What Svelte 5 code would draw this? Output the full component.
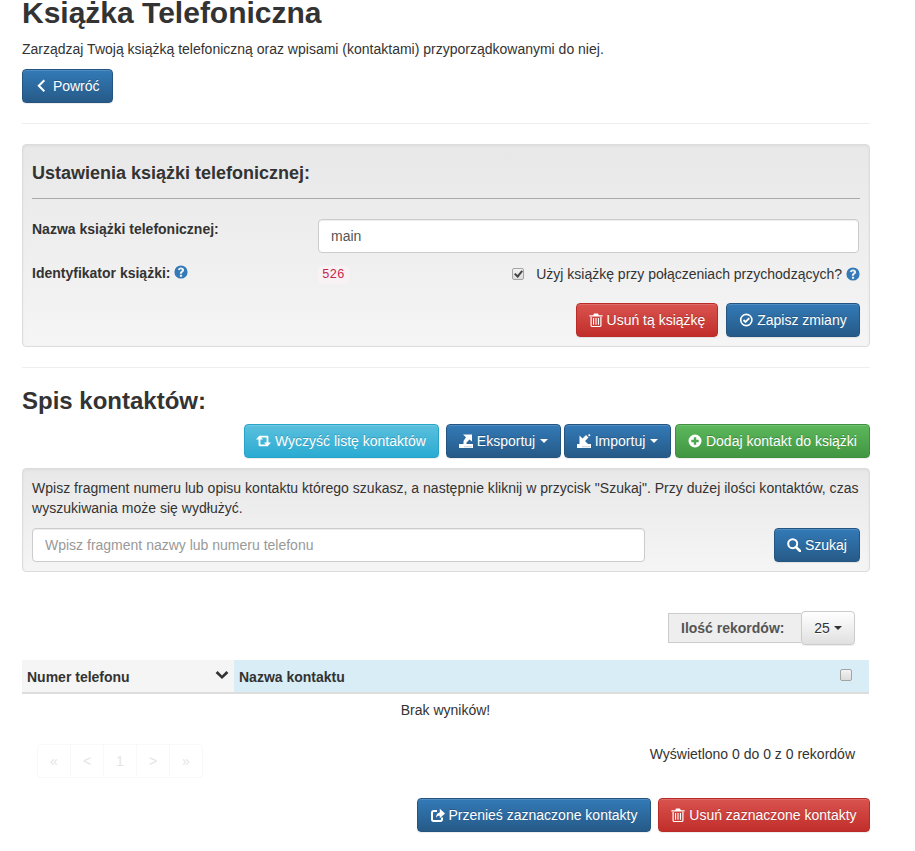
<script lang="ts">
  const pages = ['«', '<', '1', '>', '»'];
</script>

{#snippet icon(name: string)}
  {#if name === 'retweet'}
    <svg class="icon wide" viewBox="0 0 17 12" aria-hidden="true">
      <path d="M1 4.400 4.500.6 8 4.400H5.400v5h5.800l1.600 1.800H4.800c-.8 0-1.200-.4-1.200-1.200V4.400zM16 7.600l-3.500 3.800L9 7.600h2.600v-5H5.800L4.200.8h8c.8 0 1.200.4 1.200 1.200v5.600z" fill="currentColor" />
    </svg>
  {:else}
    <svg class="icon" viewBox="0 0 14 14" aria-hidden="true">
      {#if name === 'back'}
        <path d="M9.300 1.300 3.800 6.800l5.500 5.500" fill="none" stroke="currentColor" stroke-width="2" />
      {:else if name === 'trash'}
        <path d="M4.200 2.200 5 .5h4l.8 1.700H13.600v1.300H.4V2.200zM1.500 4h1.200v8.400c0 .3.200.5.500.5h7.600c.3 0 .5-.2.500-.5V4h1.200v8.600c0 .8-.6 1.400-1.400 1.400H2.900c-.8 0-1.400-.6-1.400-1.400zM4 5h1.100v6.800H4zM6.450 5h1.100v6.800h-1.100zM8.900 5H10v6.800H8.900z" fill="currentColor" />
      {:else if name === 'check'}
        <circle cx="7.300" cy="7" r="5.600" fill="none" stroke="currentColor" stroke-width="1.600" />
        <path d="m4.500 7 2 2 3.800-3.800" fill="none" stroke="currentColor" stroke-width="1.800" />
      {:else if name === 'export'}
        <path d="M0 10h14v4H0zM4 .5h9v7l-2.500-2-3 3V10h-3V7L7 3.200z" fill="currentColor" />
        <path d="M5 12.500h8v.7H5z" fill="#9fb8d0" />
      {:else if name === 'import'}
        <path d="M0 10h14v4H0zM2.500 1.500l3 3L9 1l2.500 2.500L8 7l3 3H2.500zM11 1l1.500-1 1 1.500-1.500 1z" fill="currentColor" />
        <path d="M5 12.500h8v.7H5z" fill="#9fb8d0" />
      {:else if name === 'plus'}
        <path fill-rule="evenodd" d="M7 .5a6.500 6.500 0 1 1 0 13 6.500 6.500 0 0 1 0-13zM5.800 3.300v2.500H3.300v2.400h2.500v2.500h2.400V8.200h2.500V5.800H8.200V3.300z" fill="currentColor" />
      {:else if name === 'search'}
        <circle cx="5.700" cy="5.700" r="4.500" fill="none" stroke="currentColor" stroke-width="2" />
        <path d="m8.800 8.800 4.200 4.200" fill="none" stroke="currentColor" stroke-width="2.600" stroke-linecap="round" />
      {:else if name === 'share'}
        <path d="M11 9.500v1.800c0 1-.7 1.700-1.700 1.700H2.700C1.700 13 1 12.300 1 11.300V4.700C1 3.700 1.700 3 2.700 3H6" fill="none" stroke="currentColor" stroke-width="2" />
        <path d="M8.800.8 14 5.500l-5.200 4.700V7.700C6.800 7.700 5.700 8.300 5 10c0-3.300 1.600-5.200 3.800-5.500z" fill="currentColor" />
      {:else if name === 'down'}
        <path d="M.6 3.900 2.600 2 7 6.400 11.400 2l2 1.900L7 10z" fill="currentColor" />
      {:else if name === 'help'}
        <path fill-rule="evenodd" d="M7 .4a6.600 6.600 0 1 1 0 13.200A6.600 6.600 0 0 1 7 .4zM5.900 9.700v2h2.200v-2zM7 2.400c-1.700 0-2.900.9-3.200 2.400l1.900.5c.2-.8.600-1.100 1.200-1.100.6 0 1 .3 1 .8 0 .5-.4.800-.9 1.200-.8.500-1.100 1.100-1.100 1.900v.6H8v-.4c0-.4.200-.6.800-1 .8-.6 1.300-1.200 1.300-2.300C10.100 3.400 8.800 2.400 7 2.400z" fill="currentColor" />
      {/if}
    </svg>
  {/if}
{/snippet}

<main class="page">
  <h1>Książka Telefoniczna</h1>
  <p class="lead">Zarządzaj Twoją książką telefoniczną oraz wpisami (kontaktami) przyporządkowanymi do niej.</p>
  <button class="btn primary">{@render icon('back')} Powróć</button>
  <hr class="first" />

  <section class="well settings">
    <h4>Ustawienia książki telefonicznej:</h4>
    <div class="formrow namerow">
      <b>Nazwa książki telefonicznej:</b>
      <input class="control" type="text" value="main" />
    </div>
    <div class="formrow idrow">
      <b class="idlabel">Identyfikator książki: <span class="help">{@render icon('help')}</span></b>
      <code>526</code>
      <label class="incoming">
        <input class="check" type="checkbox" checked />
        <span>Użyj książkę przy połączeniach przychodzących?</span>
        <span class="help">{@render icon('help')}</span>
      </label>
    </div>
    <div class="actions">
      <button class="btn danger remove">{@render icon('trash')} Usuń tą książkę</button>
      <button class="btn primary save">{@render icon('check')} Zapisz zmiany</button>
    </div>
  </section>

  <hr class="second" />
  <h3>Spis kontaktów:</h3>

  <div class="toolbar">
    <button class="btn info wipe">{@render icon('retweet')} Wyczyść listę kontaktów</button>
    <button class="btn primary export">{@render icon('export')} Eksportuj <i class="caret"></i></button>
    <button class="btn primary import">{@render icon('import')} Importuj <i class="caret"></i></button>
    <button class="btn success add">{@render icon('plus')} Dodaj kontakt do książki</button>
  </div>

  <section class="well search">
    <p>Wpisz fragment numeru lub opisu kontaktu którego szukasz, a następnie kliknij w przycisk "Szukaj". Przy dużej ilości kontaktów, czas wyszukiwania może się wydłużyć.</p>
    <div class="searchrow">
      <input class="control" type="text" placeholder="Wpisz fragment nazwy lub numeru telefonu" />
      <button class="btn primary">{@render icon('search')} Szukaj</button>
    </div>
  </section>

  <div class="pagesize">
    <span class="addon">Ilość rekordów:</span>
    <button class="btn default">25 <i class="caret"></i></button>
  </div>

  <table>
    <thead>
      <tr>
        <th class="sorted"><div>Numer telefonu {@render icon('down')}</div></th>
        <th class="name"><div>Nazwa kontaktu <input class="check" type="checkbox" /></div></th>
      </tr>
    </thead>
    <tbody>
      <tr><td colspan="2">Brak wyników!</td></tr>
    </tbody>
  </table>

  <div class="tablefoot">
    <ul class="pagination">
      {#each pages as page}
        <li>{page}</li>
      {/each}
    </ul>
    <span class="count">Wyświetlono 0 do 0 z 0 rekordów</span>
  </div>

  <div class="bulk">
    <button class="btn primary move">{@render icon('share')} Przenieś zaznaczone kontakty</button>
    <button class="btn danger drop">{@render icon('trash')} Usuń zaznaczone kontakty</button>
  </div>
</main>

<style>
  :global(body) {
    margin: 0;
    background: #fff;
    color: #333;
    font: 14px/20px "Liberation Sans", Arial, sans-serif;
  }
  .page {
    width: 848px;
    height: 851px;
    margin-left: 22px;
  }
  h1 {
    margin: 0;
    height: 27px;
    font-size: 30px;
    line-height: 26px;
    font-weight: 700;
  }
  .lead {
    margin: 12px 0 10px;
  }
  hr {
    margin: 0;
    border: 0;
    border-top: 1px solid #eee;
  }
  hr.first {
    margin: 20px 0;
  }
  hr.second {
    margin-top: 20px;
  }
  h3 {
    margin: 20px 0 10px;
    font-size: 24px;
    line-height: 26px;
    font-weight: 700;
  }
  h4 {
    margin: 0 0 20px;
    padding: 9px 0 15px;
    border-bottom: 1px solid #aaa;
    font-size: 18px;
    line-height: 20px;
    font-weight: 700;
  }

  .btn {
    display: inline-flex;
    align-items: center;
    justify-content: center;
    height: 34px;
    box-sizing: border-box;
    padding: 0 12px;
    border: 1px solid transparent;
    border-radius: 4px;
    font: inherit;
    color: #fff;
    white-space: pre;
    text-shadow: 0 -1px 0 rgba(0, 0, 0, .2);
    box-shadow: inset 0 1px 0 rgba(255, 255, 255, .15), 0 1px 1px rgba(0, 0, 0, .075);
  }
  .primary {
    background: linear-gradient(#337ab7, #265a88);
    border-color: #245580;
  }
  .danger {
    background: linear-gradient(#d9534f, #c12e2a);
    border-color: #b92c28;
  }
  .info {
    background: linear-gradient(#5bc0de, #2aabd2);
    border-color: #28a4c9;
  }
  .success {
    background: linear-gradient(#5cb85c, #419641);
    border-color: #3e8f3e;
  }
  .default {
    background: linear-gradient(#fff, #e0e0e0);
    border-color: #ccc;
    color: #333;
    text-shadow: 0 1px 0 #fff;
  }
  .icon {
    width: 14px;
    height: 14px;
    flex: none;
  }
  .icon.wide {
    width: 17px;
    height: 12px;
    margin: 0 -1px 0 -2px;
  }
  .caret {
    width: 0;
    height: 0;
    margin-left: 1px;
    border-top: 4px solid currentColor;
    border-left: 4px solid transparent;
    border-right: 4px solid transparent;
  }

  .well {
    box-sizing: border-box;
    padding: 9px;
    border: 1px solid #dcdcdc;
    border-radius: 4px;
    background: linear-gradient(#e8e8e8, #f5f5f5);
    box-shadow: inset 0 1px 3px rgba(0, 0, 0, .05), 0 1px 0 rgba(255, 255, 255, .1);
  }
  .settings {
    height: 203px;
  }
  .control {
    box-sizing: border-box;
    height: 34px;
    padding: 6px 12px;
    border: 1px solid #ccc;
    border-radius: 4px;
    background: #fff;
    font: inherit;
    color: #555;
    box-shadow: inset 0 1px 1px rgba(0, 0, 0, .075);
  }
  .control::placeholder {
    color: #999;
    opacity: 1;
  }
  .formrow {
    display: grid;
    grid-template-columns: 286px 1fr;
  }
  .namerow .control {
    width: 541px;
  }
  .idrow {
    grid-template-columns: 286px 60px 1fr;
    height: 20px;
    margin-top: 10px;
  }
  .idlabel {
    white-space: pre;
  }
  .help {
    display: inline-block;
    color: #337ab7;
    vertical-align: -1px;
    line-height: 14px;
  }
  .help .icon {
    display: block;
  }
  code {
    justify-self: start;
    height: 18px;
    margin-top: 3px;
    padding: 0 4px;
    border-radius: 4px;
    background: #f9f2f4;
    color: #c7254e;
    font: 12.600px/18px "Liberation Mono", monospace;
  }
  .incoming {
    display: flex;
    align-items: center;
    justify-content: flex-end;
  }
  .incoming .help {
    margin-left: 4px;
    height: 14px;
  }
  .check {
    appearance: none;
    position: relative;
    width: 12px;
    height: 12px;
    margin: 0;
    flex: none;
    box-sizing: border-box;
    border: 1px solid #a4a4a4;
    border-radius: 2px;
    background: linear-gradient(#f2f2f2, #dcdcdc);
  }
  .incoming .check {
    margin-right: 12px;
    margin-top: 1px;
  }
  .check:checked::after {
    content: "";
    position: absolute;
    left: 3px;
    top: 0;
    width: 3px;
    height: 6px;
    border: solid #444;
    border-width: 0 2px 2px 0;
    transform: rotate(40deg);
  }
  .actions {
    display: flex;
    justify-content: flex-end;
    gap: 8px;
    margin-top: 20px;
  }
  .remove {
    width: 142px;
  }
  .save {
    width: 134px;
  }

  .toolbar {
    display: flex;
    justify-content: flex-end;
    gap: 3px;
  }
  .wipe {
    width: 195px;
    margin-right: 4px;
  }
  .export {
    width: 115px;
  }
  .import {
    width: 107px;
  }
  .add {
    width: 195px;
    margin-left: 1px;
  }
  .search {
    height: 104px;
    margin-top: 10px;
  }
  .search p {
    margin: 0 0 10px;
    letter-spacing: .02px;
  }
  .searchrow {
    display: flex;
    justify-content: space-between;
  }
  .searchrow .control {
    width: 613px;
  }
  .searchrow .btn {
    width: 86px;
  }

  .pagesize {
    display: flex;
    justify-content: flex-end;
    align-items: center;
    height: 34px;
    margin: 39px 15px 15px 0;
  }
  .addon {
    box-sizing: border-box;
    width: 133px;
    height: 30px;
    padding-left: 12px;
    border: 1px solid #ccc;
    border-right: 0;
    background: #eee;
    color: #555;
    font-weight: 700;
    line-height: 28px;
  }
  .pagesize .btn {
    width: 54px;
  }
  .pagesize .caret {
    margin-left: 0;
  }

  table {
    width: 847px;
    border-collapse: separate;
    border-spacing: 0;
    table-layout: fixed;
  }
  th {
    height: 34px;
    box-sizing: border-box;
    padding: 7px 5px 5px;
    border-bottom: 2px solid #ddd;
    text-align: left;
  }
  th div {
    display: flex;
    justify-content: space-between;
    align-items: center;
  }
  th .icon {
    margin-top: -2px;
  }
  .sorted {
    width: 212px;
    background: #f5f5f5;
  }
  .name {
    background: #d9edf7;
  }
  .name .check {
    margin-right: 12px;
    margin-top: -5px;
  }
  td {
    height: 32px;
    padding: 0;
    text-align: center;
    vertical-align: middle;
  }

  .tablefoot {
    display: flex;
    justify-content: space-between;
    align-items: flex-start;
    margin-top: 18px;
    padding: 0 15px;
  }
  .pagination {
    display: flex;
    margin: 0;
    padding: 0;
    list-style: none;
    opacity: .2;
  }
  .pagination li {
    box-sizing: border-box;
    width: 34px;
    height: 34px;
    margin-left: -1px;
    border: 1px solid #ddd;
    color: #777;
    text-align: center;
    line-height: 32px;
  }
  .pagination li:first-child {
    margin-left: 0;
    border-radius: 4px 0 0 4px;
  }
  .pagination li:last-child {
    border-radius: 0 4px 4px 0;
  }
  .bulk {
    display: flex;
    justify-content: flex-end;
    gap: 7px;
    margin-top: 20px;
  }
  .move {
    width: 234px;
  }
  .drop {
    width: 212px;
  }
</style>
